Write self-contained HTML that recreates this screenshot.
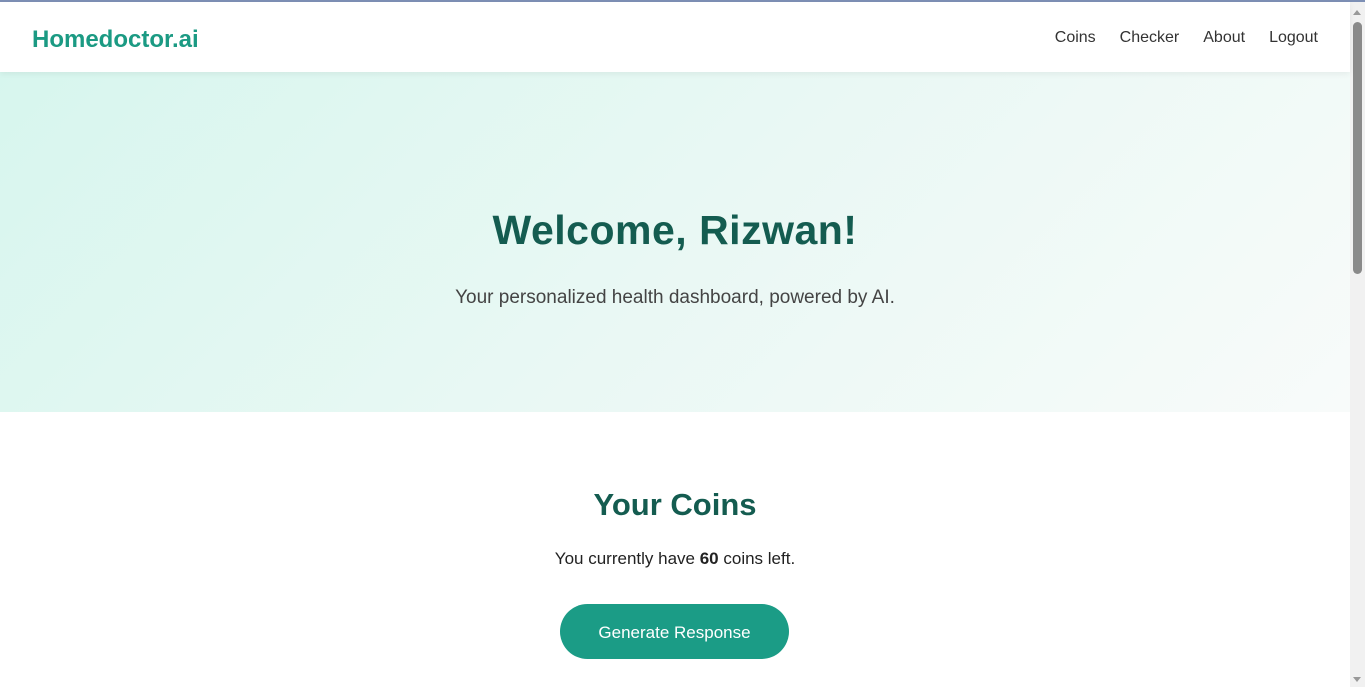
<!DOCTYPE html>
<html><head><style>
html,body{margin:0;padding:0}
body{width:1365px;height:687px;overflow:hidden;font-family:"Liberation Sans",sans-serif;background:#fff;position:relative}
.top{position:absolute;left:0;top:0;width:1365px;height:2px;background:#7d8fb5}
header{position:absolute;top:2px;left:0;width:1350px;height:70px;background:#fff;box-shadow:0 2px 6px rgba(0,0,0,.06);z-index:2}
.logo{position:absolute;left:32px;top:24px;font-size:24px;font-weight:bold;color:#1b9a83}
nav{position:absolute;right:32px;top:27px;font-size:16px;color:#333}
nav span{margin-left:24px}
.hero{position:absolute;top:72px;left:0;width:1350px;height:340px;background:linear-gradient(135deg,#d7f6ee 0%,#e9f8f4 50%,#f8fbfa 100%)}
h1{position:absolute;top:135px;width:100%;text-align:center;margin:0;font-size:41px;font-weight:900;color:#145c50;letter-spacing:.5px}
.sub{position:absolute;top:215px;width:100%;text-align:center;font-size:19px;color:#444}
h2{position:absolute;top:487px;width:1350px;text-align:center;margin:0;font-size:31px;font-weight:bold;color:#145c50}
.p{position:absolute;top:549px;width:1350px;text-align:center;font-size:17px;color:#222}
.btn{position:absolute;left:560px;top:604px;width:229px;height:55px;border-radius:28px;background:#1b9c86;color:#fff;font-size:17px;text-align:center;line-height:57px}
.sb{position:absolute;right:0;top:2px;width:15px;height:685px;background:#f1f1f1}
.th{position:absolute;right:3px;top:20px;width:9px;height:252px;border-radius:5px;background:#8a8a8a}
.ar{position:absolute;right:4px;top:8px;width:0;height:0;border-left:4px solid transparent;border-right:4px solid transparent;border-bottom:5px solid #999}
.ar2{position:absolute;right:4px;top:675px;width:0;height:0;border-left:4px solid transparent;border-right:4px solid transparent;border-top:5px solid #999}
</style></head><body>
<div class="top"></div>
<header><div class="logo">Homedoctor.ai</div><nav><span>Coins</span><span>Checker</span><span>About</span><span>Logout</span></nav></header>
<div class="hero"><h1>Welcome, Rizwan!</h1><div class="sub">Your personalized health dashboard, powered by AI.</div></div>
<h2>Your Coins</h2>
<div class="p">You currently have <b>60</b> coins left.</div>
<div class="btn">Generate Response</div>
<div class="sb"><div class="ar"></div><div class="th"></div><div class="ar2"></div></div>
</body></html>
